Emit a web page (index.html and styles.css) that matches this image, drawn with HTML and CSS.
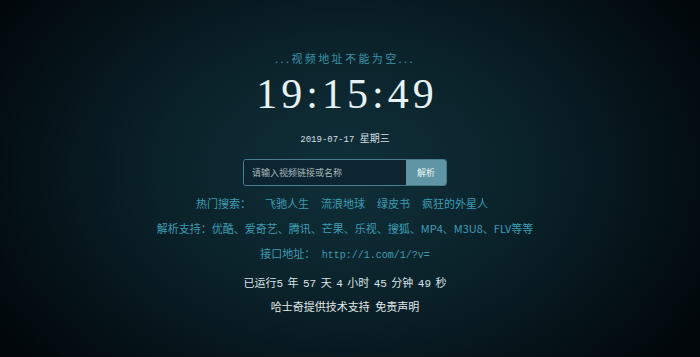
FILE: index.html
```html
<!DOCTYPE html>
<html lang="zh-CN">
<head>
<meta charset="utf-8">
<title>视频解析</title>
<link rel="stylesheet" href="styles.css">
</head>
<body>
<main class="page">
  <p class="notice">...视频地址不能为空...</p>
  <div class="clock">19:15:49</div>
  <div class="date">2019-07-17 <span class="week">星期三</span></div>
  <form class="search">
    <input class="search-input" type="text" placeholder="请输入视频链接或名称">
    <button class="search-btn" type="button">解析</button>
  </form>
  <p class="hot"><span class="hot-label">热门搜索：</span><a>飞驰人生</a><a>流浪地球</a><a>绿皮书</a><a>疯狂的外星人</a></p>
  <p class="support">解析支持：优酷、爱奇艺、腾讯、芒果、乐视、搜狐、MP4、M3U8、FLV等等</p>
  <p class="api">接口地址： <span class="mono">http://1.com/1/?v=</span></p>
  <p class="uptime">已运行<span class="mono">5</span> 年 <span class="mono">57</span> 天 <span class="mono">4</span> 小时 <span class="mono">45</span> 分钟 <span class="mono">49</span> 秒</p>
  <p class="footer">哈士奇提供技术支持 免责声明</p>
</main>
</body>
</html>
```
FILE: styles.css
```css
html, body {
  margin: 0;
  height: 100%;
}
body {
  background: radial-gradient(ellipse 420px 300px at 345px 170px, #10303a 0%, #0a2129 45%, #041015 80%, #01060a 100%);
  background-color: #01060a;
  font-family: "Noto Sans CJK SC", "Noto Sans", sans-serif;
  color: #d8e4e8;
  overflow: hidden;
}
.page {
  width: 690px;
  display: flex;
  flex-direction: column;
  align-items: center;
  padding-top: 49px;
}
p { margin: 0; }
.notice {
  font-size: 11px;
  line-height: 18px;
  letter-spacing: 2.4px;
  color: #3a93a8;
}
.clock {
  margin-top: 4px;
  font-family: "Liberation Serif", serif;
  font-size: 42px;
  line-height: 46px;
  letter-spacing: 4px;
  padding-left: 4px;
  color: #e6f2f4;
}
.date {
  margin-top: 14px;
  font-family: "Liberation Mono", monospace;
  font-size: 9px;
  line-height: 14px;
  color: #d5dfe2;
}
.week { font-family: "Noto Sans CJK SC", sans-serif; font-size: 10px; }
.search {
  margin-top: 12px;
  display: flex;
  width: 204px;
  height: 27px;
  box-sizing: border-box;
  border: 1.5px solid #467f8c;
  border-radius: 3px;
  overflow: hidden;
}
.search-input {
  flex: 1;
  min-width: 0;
  border: 0;
  background: #0c2530;
  padding: 0 8px;
  font-family: "Noto Sans CJK SC", sans-serif;
  font-size: 9px;
  color: #c0d0d4;
  outline: none;
}
.search-input::placeholder { color: #a8b8bd; }
.search-btn {
  width: 40px;
  border: 0;
  background: #5f95a5;
  color: #eef5f7;
  font-family: "Noto Sans CJK SC", sans-serif;
  font-size: 9px;
  padding: 0;
}
.hot, .support, .api {
  font-size: 11px;
  line-height: 25px;
  color: #3d9db3;
}
.hot { margin-top: 5px; }
.hot-label { margin-right: 8px; }
.hot a { margin: 0 6px; }
.mono { font-family: "Liberation Mono", monospace; }
.api .mono { font-size: 10px; margin-left: 4px; }
.uptime {
  margin-top: 2px;
  font-size: 11px;
  line-height: 24px;
  word-spacing: 2px;
  color: #d8e3e6;
}
.footer {
  margin-top: -1px;
  font-size: 11px;
  line-height: 22px;
  word-spacing: 3px;
  color: #e0e9eb;
}
```
